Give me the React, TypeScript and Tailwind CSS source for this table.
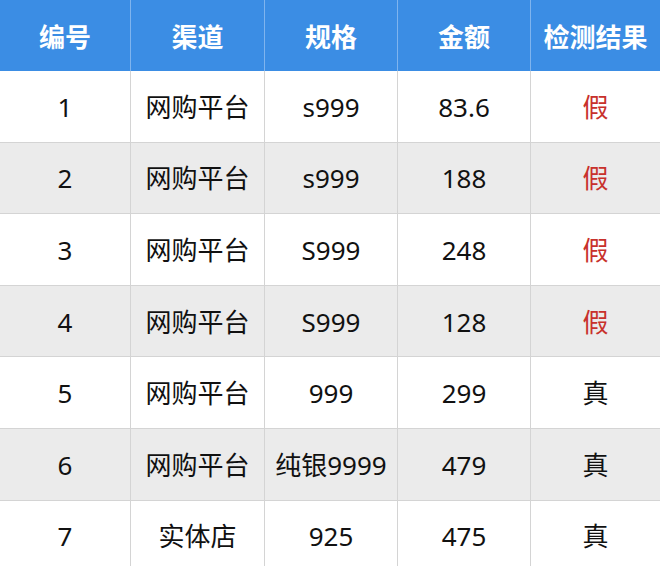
const rows = [
  { id: '1', channel: '网购平台', spec: 's999', price: '83.6', result: '假' },
  { id: '2', channel: '网购平台', spec: 's999', price: '188', result: '假' },
  { id: '3', channel: '网购平台', spec: 'S999', price: '248', result: '假' },
  { id: '4', channel: '网购平台', spec: 'S999', price: '128', result: '假' },
  { id: '5', channel: '网购平台', spec: '999', price: '299', result: '真' },
  { id: '6', channel: '网购平台', spec: '纯银9999', price: '479', result: '真' },
  { id: '7', channel: '实体店', spec: '925', price: '475', result: '真' },
];

const headers = ['编号', '渠道', '规格', '金额', '检测结果'];
const cols = 'grid grid-cols-[130px_134px_133px_133px_130px]';

export default function App() {
  return (
    <div className="h-[566px] w-[660px] overflow-hidden bg-white font-['Noto_Sans','Noto_Sans_CJK_SC',sans-serif]">
      <div className={`${cols} h-[71px] bg-[#3b8de4] text-[26px] font-bold text-white`}>
        {headers.map((h, i) => (
          <div
            key={h}
            className={`flex items-center justify-center pt-[3px] ${i > 0 ? 'border-l border-[#7fb4ee]' : ''}`}
          >
            {h}
          </div>
        ))}
      </div>
      {rows.map((r, idx) => {
        const cells = [r.id, r.channel, r.spec, r.price, r.result];
        return (
          <div
            key={r.id}
            className={`${cols} h-[71.6px] border-b border-[#d4d4d4] text-[26px] text-[#111] ${idx % 2 ? 'bg-[#ebebeb]' : 'bg-white'}`}
          >
            {cells.map((c, i) => (
              <div
                key={i}
                className={`flex items-center justify-center pt-[2px] ${i > 0 ? 'border-l border-[#d4d4d4]' : ''} ${
                  i === 4 && c === '假' ? 'text-[#c8312c]' : ''
                }`}
              >
                {c}
              </div>
            ))}
          </div>
        );
      })}
    </div>
  );
}
